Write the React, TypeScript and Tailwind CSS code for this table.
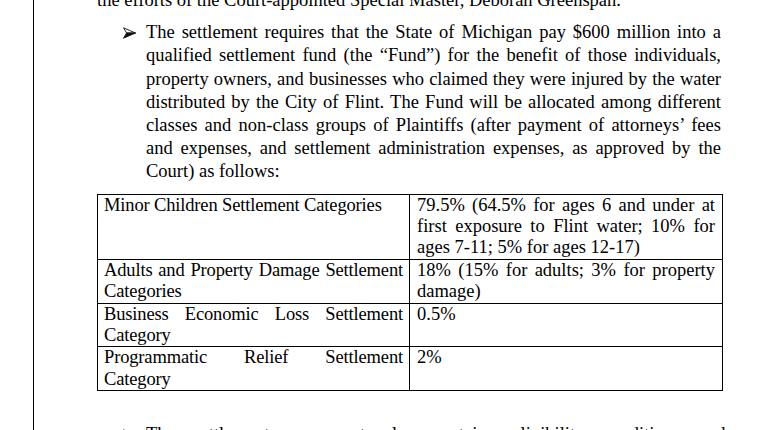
const rows = [
  {
    label: 'Minor Children Settlement Categories',
    share: '79.5% (64.5% for ages 6 and under at first exposure to Flint water; 10% for ages 7-11; 5% for ages 12-17)',
  },
  {
    label: 'Adults and Property Damage Settlement Categories',
    share: '18% (15% for adults; 3% for property damage)',
  },
  { label: 'Business Economic Loss Settlement Category', share: '0.5%' },
  { label: 'Programmatic Relief Settlement Category', share: '2%' },
]

function Arrow() {
  return (
    <svg width="13" height="12" viewBox="0 0 13 12" className="shrink-0">
      <path d="M0.5 0.8 L12.5 6 L3.6 6 Z" fill="#fff" stroke="#111" strokeWidth="0.9" strokeLinejoin="round" />
      <path d="M0.5 11.2 L12.5 6 L3.6 6 Z" fill="#111" stroke="#111" strokeWidth="0.9" strokeLinejoin="round" />
    </svg>
  )
}

export default function App() {
  return (
    <div className="h-[430px] w-[774px] overflow-hidden bg-white pl-[33px]">
      <div
        className="flow-root h-full border-l border-black pl-[63px] text-[18.5px] leading-[23.2px] text-black"
        style={{ fontFamily: '"Liberation Serif", "Times New Roman", serif' }}
      >
        <p className="-mt-[11px] whitespace-nowrap">
          the efforts of the Court-appointed Special Master, Deborah Greenspan.
        </p>

        {/* Bullet paragraph */}
        <div className="mt-[9px] flex">
          <div className="w-[49px] shrink-0 pl-[26px] pt-[6px]">
            <Arrow />
          </div>
          <p className="w-[575px] text-justify">
            The settlement requires that the State of Michigan pay $600 million into a qualified settlement fund
            (the “Fund”) for the benefit of those individuals, property owners, and businesses who claimed they
            were injured by the water distributed by the City of Flint. The Fund will be allocated among different
            classes and non-class groups of Plaintiffs (after payment of attorneys’ fees and expenses, and
            settlement administration expenses, as approved by the Court) as follows:
          </p>
        </div>

        {/* Allocation table */}
        <table className="mt-[10px] w-[625px] table-fixed border-collapse leading-[21.4px]">
          <colgroup>
            <col className="w-[312px]" />
            <col className="w-[313px]" />
          </colgroup>
          <tbody>
            {rows.map((r) => (
              <tr key={r.label}>
                <td className="border border-black px-[6px] py-0 align-top text-justify tracking-[-0.15px]">
                  {r.label}
                </td>
                <td className="border border-black px-[7px] py-0 align-top text-justify">{r.share}</td>
              </tr>
            ))}
          </tbody>
        </table>

        <div className="mt-[32px] flex">
          <div className="w-[49px] shrink-0 pl-[26px] pt-[6px]">
            <Arrow />
          </div>
          <p className="w-[575px] whitespace-nowrap [word-spacing:14px]">
            The settlement agreement also contains eligibility conditions and procedures
          </p>
        </div>
      </div>
    </div>
  )
}
